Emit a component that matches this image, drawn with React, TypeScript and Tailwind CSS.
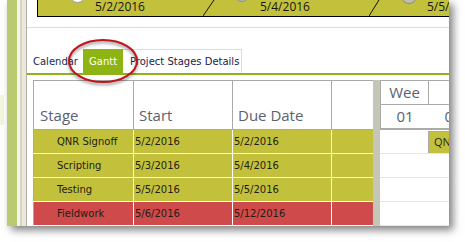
const olive = "bg-[#c3c13c]";

const rows = [
	{ stage: "QNR Signoff", start: "5/2/2016", due: "5/2/2016", bg: olive },
	{ stage: "Scripting", start: "5/3/2016", due: "5/4/2016", bg: olive },
	{ stage: "Testing", start: "5/5/2016", due: "5/5/2016", bg: olive },
	{ stage: "Fieldwork", start: "5/6/2016", due: "5/12/2016", bg: "bg-[#cf4a4a]" },
];

function Diagonal({ w }: { w: number }) {
	return (
		<svg width={w} height={16} className="shrink-0">
			<line x1={0} y1={16} x2={w - 1} y2={0} stroke="#111" strokeWidth={1} />
		</svg>
	);
}

function Banner() {
	return (
		<div className="h-[17px] pl-[10px] flex">
			<div className={`flex-1 flex border-l border-b border-black ${olive} overflow-hidden font-['Open_Sans',sans-serif] text-[12px] leading-[13px] text-[#151515]`}>
				<div className="w-[165px] shrink-0 flex items-start">
					<div className="ml-[32px] w-[15px] h-[15px] -mt-[12px] rounded-full bg-white border border-[#9a9a9a]" />
					<span className="ml-[10px] whitespace-nowrap">5/2/2016</span>
				</div>
				<Diagonal w={12} />
				<div className="w-[154px] shrink-0 flex items-start">
					<div className="ml-[20px] w-[14px] h-[14px] -mt-[12px] rounded-full bg-[#b4b8bc] border border-[#8a8e92]" />
					<span className="ml-[11px] whitespace-nowrap">5/4/2016</span>
				</div>
				<Diagonal w={11} />
				<div className="flex-1 flex items-start">
					<div className="ml-[21px] w-[16px] h-[16px] -mt-[12px] rounded-full bg-[#c0bdb0] border border-[#8e8b80]" />
					<span className="ml-[10px] whitespace-nowrap">5/5/2016</span>
				</div>
			</div>
		</div>
	);
}

function Tabs() {
	return (
		<div className="h-[24px] flex items-stretch text-[10px] font-['DejaVu_Sans',sans-serif]">
			<div className="w-[56px] pl-[6px] flex items-center text-[#1b2a4a]">Calendar</div>
			<div className="w-[40px] pl-[6px] flex items-center bg-[#8db412] text-white">Gantt</div>
			<div className="w-[119px] pl-[7px] flex items-center border-t border-r border-[#dedede] text-[#22204a] whitespace-nowrap">
				Project Stages Details
			</div>
		</div>
	);
}

function StageTable() {
	return (
		<div className="w-[340px] shrink-0 flex flex-col">
			<div className="h-[50px] flex border-t border-b border-[#a9a9a9] bg-white font-['Open_Sans',sans-serif] text-[15px] leading-[20px] text-[#5b6270]">
				<div className="w-[100px] border-l border-[#a9a9a9] flex items-end pl-[6px] pb-[4px]">Stage</div>
				<div className="w-[99px] border-l border-[#a9a9a9] flex items-end pl-[5px] pb-[4px]">Start</div>
				<div className="w-[100px] border-l border-r border-[#a9a9a9] flex items-end pl-[5px] pb-[4px]">Due Date</div>
				<div className="w-[41px]" />
			</div>
			{rows.map((r) => (
				<div
					key={r.stage}
					className={`h-[24px] flex border-b border-white ${r.bg} font-['DejaVu_Sans',sans-serif] text-[10px] text-[#1e1e14]`}
				>
					<div className="w-[100px] border-l border-[#a9a9a9] flex items-center pl-[23px]">{r.stage}</div>
					<div className="w-[99px] border-l border-white flex items-center pl-[1px]">{r.start}</div>
					<div className="w-[100px] border-l border-r border-white flex items-center pl-[1px]">{r.due}</div>
					<div className="w-[41px]" />
				</div>
			))}
		</div>
	);
}

function GanttPane() {
	return (
		<div className="flex-1 flex flex-col overflow-hidden">
			<div className="h-[50px] flex flex-col border-t border-b-2 border-[#aaaaaa] font-['Open_Sans',sans-serif] text-[15px] text-[#5b6270]">
				<div className="h-[24px] flex border-b border-[#aaaaaa]">
					<div className="w-[49px] shrink-0 border-l border-r border-[#aaaaaa] flex items-center justify-center">Wee</div>
					<div className="w-[48px] shrink-0" />
				</div>
				<div className="flex-1 flex border-l border-[#aaaaaa]">
					<div className="w-[48px] shrink-0 flex items-center justify-center">01</div>
					<div className="w-[48px] shrink-0 flex items-center justify-center">02</div>
				</div>
			</div>
			{rows.map((r, i) => (
				<div key={r.stage} className="h-[24px] flex border-b border-[#e6e6e6]">
					<div className="w-[48px] shrink-0" />
					{i === 0 && (
						<div className={`w-[70px] shrink-0 h-[22px] mt-px border-l border-t border-[#a9a9a9] ${olive} pl-[5px] flex items-center whitespace-nowrap font-['Open_Sans',sans-serif] text-[11px] text-[#222]`}>
							QNR Signoff
						</div>
					)}
				</div>
			))}
		</div>
	);
}

export default function App() {
	return (
		<div className="w-[465px] h-[242px] bg-white overflow-hidden flex">
			<div className="w-[7px] shrink-0">
				<div className="mt-[95px] w-[4px] h-[30px] bg-[#f1f6dc]" />
			</div>
			<div className="w-[442px] h-[226px] shrink-0 flex bg-white shadow-[4px_4px_8px_rgba(0,0,0,0.5)]">
				<div className="w-[10px] bg-[#b8cb6e]" />
				<div className="w-[3px] bg-[#f4f4ec]" />
				<div className="w-[2px] bg-[#d6d4c6]" />
				<div className="w-[4px] bg-[#ebe9dc]" />
				<div className="w-px bg-[#b0aea0]" />
				<div className="flex-1 flex flex-col relative overflow-hidden">
					<Banner />
					<div className="mt-[10px] h-px bg-[#dcdcdc]" />
					<div className="h-[21px]" />
					<Tabs />
					<div className="h-[2px] bg-[#8db319]" />
					<div className="h-[5px]" />
					<div className="flex-1 flex pl-[6px]">
						<StageTable />
						<div className="w-[7px] shrink-0 bg-[#c5c6b6]" />
						<GanttPane />
					</div>
					<svg
						width={74}
						height={48}
						className="absolute left-[40px] top-[38px] drop-shadow-[0_2px_1.5px_rgba(0,0,0,0.45)]"
					>
						<ellipse cx={36} cy={23} rx={34} ry={21} fill="none" stroke="#c1141c" strokeWidth={2} />
					</svg>
				</div>
			</div>
		</div>
	);
}
